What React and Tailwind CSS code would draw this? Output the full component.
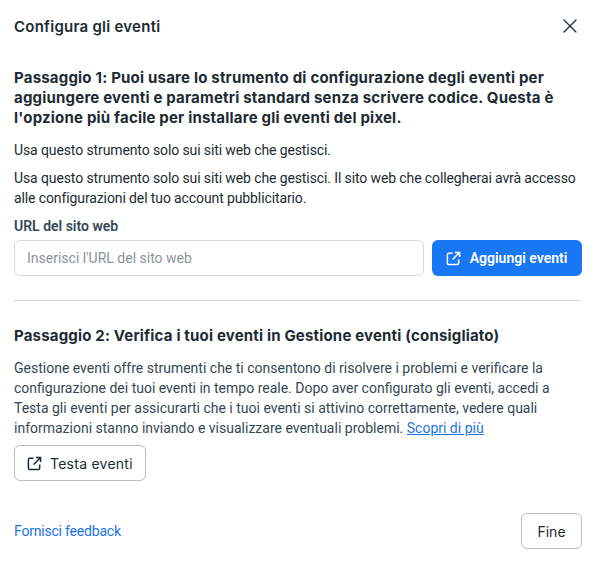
import { X } from 'lucide-react'

function OpenIcon({ className }) {
  return (
    <svg viewBox="0 0 16 16" fill="none" stroke="currentColor" strokeWidth="1.6" className={className}>
      <path d="M7 2.5H3a1.5 1.5 0 0 0-1.5 1.5v9A1.5 1.5 0 0 0 3 14.5h9a1.5 1.5 0 0 0 1.5-1.5V9" />
      <path d="M9.5 1.5h5v5M14.5 1.5 7 9" />
    </svg>
  )
}

export default function App() {
  return (
    <div className="w-[598px] h-[564px] bg-white overflow-hidden pl-[14px] pr-[16px] font-['Roboto',sans-serif] text-[#1c2b33]">
      {/* Header */}
      <div className="flex items-center justify-between h-[54px]">
        <h1 className="text-[15px] font-semibold font-['Inter',sans-serif] tracking-[0.25px]">Configura gli eventi</h1>
        <X className="w-[24px] h-[24px] mb-[2px]" strokeWidth={1.3} />
      </div>

      {/* Step 1 */}
      <h2 className="mt-[14px] text-[15px] leading-[20px] font-bold font-['Inter',sans-serif] tracking-[0.2px]">
        Passaggio 1: Puoi usare lo strumento di configurazione degli eventi per aggiungere eventi e parametri standard senza scrivere codice. Questa è l'opzione più facile per installare gli eventi del pixel.
      </h2>
      <p className="mt-[12px] text-[14px] leading-[20px] tracking-[-0.11px]">Usa questo strumento solo sui siti web che gestisci.</p>
      <p className="mt-[8px] text-[14px] leading-[20px] tracking-[-0.11px]">
        Usa questo strumento solo sui siti web che gestisci. Il sito web che collegherai avrà accesso alle configurazioni del tuo account pubblicitario.
      </p>
      <label className="block mt-[8px] text-[14px] leading-[20px] font-semibold text-[#344854]">URL del sito web</label>
      <div className="flex gap-2 mt-[4px]">
        <input
          className="flex-1 h-[36px] rounded-md border border-[#d5dade] px-3 text-[14px] outline-none placeholder:text-[#8a949c]"
          placeholder="Inserisci l'URL del sito web"
        />
        <button className="flex items-center justify-center gap-[9px] w-[150px] h-[36px] pr-[1px] rounded-md bg-[#1877f2] text-white text-[14px] font-semibold">
          <OpenIcon className="w-[15px] h-[15px]" />
          Aggiungi eventi
        </button>
      </div>

      <div className="mt-[24px] border-t border-[#d9dde1]" />

      {/* Step 2 */}
      <h2 className="mt-[25px] text-[15px] leading-[20px] font-bold font-['Inter',sans-serif] tracking-[0.18px]">
        Passaggio 2: Verifica i tuoi eventi in Gestione eventi (consigliato)
      </h2>
      <p className="mt-[12px] text-[14px] leading-[20px] text-[#344854]">
        Gestione eventi offre strumenti che ti consentono di risolvere i problemi e verificare la configurazione dei tuoi eventi in tempo reale. Dopo aver configurato gli eventi, accedi a Testa gli eventi per assicurarti che i tuoi eventi si attivino correttamente, vedere quali informazioni stanno inviando e visualizzare eventuali problemi. <a className="text-[#1b74e4] underline">Scopri di più</a>
      </p>
      <button className="flex items-center gap-2 mt-[7px] h-[36px] w-[132px] pl-[12px] rounded-md border border-[#b8bfc5] text-[14px] tracking-[0.25px] font-['Inter',sans-serif]">
        <OpenIcon className="w-[15px] h-[15px]" />
        Testa eventi
      </button>

      {/* Footer */}
      <div className="flex items-center justify-between mt-[32px]">
        <a className="text-[14px] text-[#1b74e4] tracking-[-0.2px]">Fornisci feedback</a>
        <button className="w-[61px] h-[36px] rounded-md border border-[#b8bfc5] text-[14px] font-['Inter',sans-serif]">Fine</button>
      </div>
    </div>
  )
}
